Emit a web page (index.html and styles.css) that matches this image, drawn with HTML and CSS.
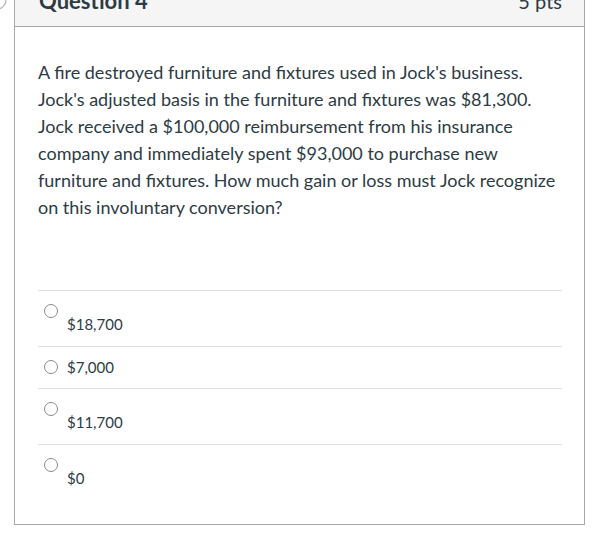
FILE: index.html
```html
<!DOCTYPE html>
<html>
<head>
<meta charset="utf-8">
<link rel="stylesheet" href="styles.css">
</head>
<body>
<svg class="corner-icon" width="12" height="14" viewBox="0 0 12 14"><circle cx="-3" cy="0" r="9" fill="none" stroke="#b5b5b5" stroke-width="1.2"/></svg>
<div class="card">
  <div class="card-header">
    <span class="q-title">Question 4</span>
    <span class="q-pts">5 pts</span>
  </div>
  <div class="card-body">
    <p class="q-text">A fire destroyed furniture and fixtures used in Jock's business. Jock's adjusted basis in the furniture and fixtures was $81,300. Jock received a $100,000 reimbursement from his insurance company and immediately spent $93,000 to purchase new furniture and fixtures. How much gain or loss must Jock recognize on this involuntary conversion?</p>
    <div class="answers">
      <div class="answer stacked"><span class="radio"></span><span class="label">$18,700</span></div>
      <div class="answer inline"><span class="radio"></span><span class="label">$7,000</span></div>
      <div class="answer stacked"><span class="radio"></span><span class="label">$11,700</span></div>
      <div class="answer stacked"><span class="radio"></span><span class="label">$0</span></div>
    </div>
  </div>
</div>
</body>
</html>
```

FILE: styles.css
```css
html, body {
  margin: 0;
  padding: 0;
  background: #ffffff;
}
body {
  font-family: Lato, "Open Sans", sans-serif;
  color: #2d3b45;
  position: relative;
  overflow: hidden;
  height: 546px;
}
.corner-icon {
  position: absolute;
  left: 0;
  top: 0;
}
.card {
  margin: -25px 0 0 14px;
  width: 569px;
  border: 1px solid #a8a8a8;
  background: #fff;
}
.card-header {
  background: #f5f5f5;
  border-bottom: 1px solid #a8a8a8;
  padding: 11px 22px 12px 24px;
  display: flex;
  justify-content: space-between;
  align-items: baseline;
  line-height: 27px;
  height: 27px;
}
.q-title {
  font-weight: 700;
  font-size: 22px;
}
.q-pts {
  font-weight: 400;
  font-size: 20px;
}
.card-body {
  padding: 32px 22px 24px 23px;
}
.q-text {
  margin: 0;
  font-size: 18px;
  line-height: 27px;
}
.answers {
  margin-top: 69px;
}
.answer {
  display: flex;
  border-top: 1px solid #dddddd;
  font-size: 15px;
  line-height: 20px;
}
.radio {
  flex: none;
  width: 12px;
  height: 12px;
  border: 1px solid #8a8a8a;
  border-radius: 50%;
  margin-left: 6px;
  background: #fff;
}
.label {
  margin-left: 9px;
}
.answer.stacked {
  align-items: flex-start;
  padding: 13px 0 13px 0;
  height: 29px;
}
.answer.stacked .label {
  padding-top: 10px;
}
.answer.inline {
  align-items: center;
  padding: 10px 0 11px 0;
  height: 20px;
}
```
